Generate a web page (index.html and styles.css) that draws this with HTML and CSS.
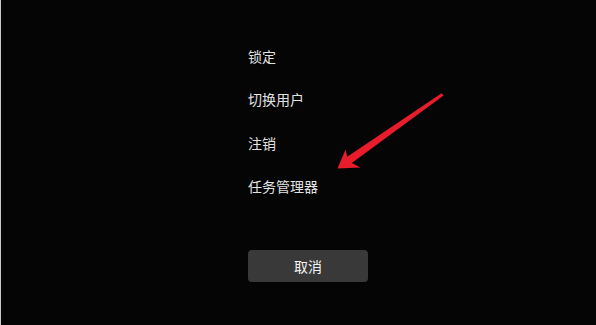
FILE: index.html
```html
<!DOCTYPE html>
<html lang="zh-CN">
<head>
<meta charset="utf-8">
<link rel="stylesheet" href="styles.css">
</head>
<body>
<div class="screen">
  <ul class="menu">
    <li class="item">锁定</li>
    <li class="item">切换用户</li>
    <li class="item">注销</li>
    <li class="item">任务管理器</li>
  </ul>
  <button class="cancel">取消</button>
  <svg class="arrow" width="596" height="325" viewBox="0 0 596 325">
    <polygon points="336.5,168.5 344.6,149.5 346.2,156.7 440.6,93.2 442.6,95.6 350.8,163.1 359.6,167.6" fill="#e81c2a"/>
  </svg>
</div>
</body>
</html>
```
FILE: styles.css
```css
html, body {
  margin: 0;
  padding: 0;
  background: #050505;
}
.screen {
  position: relative;
  width: 596px;
  height: 325px;
  border-left: 1px solid #c8c8c8;
  background: #050505;
  display: flex;
  flex-direction: column;
  align-items: flex-start;
  padding-left: 247px;
  box-sizing: border-box;
  font-family: "Noto Sans CJK SC", "Noto Sans", sans-serif;
}
.menu {
  list-style: none;
  margin: 35px 0 0 0;
  padding: 0;
}
.item {
  height: 43.4px;
  line-height: 43.4px;
  font-size: 14px;
  color: #e2e2e2;
}
.cancel {
  margin-top: 41px;
  width: 120px;
  height: 32px;
  border: none;
  border-radius: 4px;
  background: #393939;
  color: #f4f4f4;
  font-family: "Noto Sans CJK SC", "Noto Sans", sans-serif;
  font-size: 14px;
  padding: 0;
}
.arrow {
  position: absolute;
  left: 0;
  top: 0;
}
```
